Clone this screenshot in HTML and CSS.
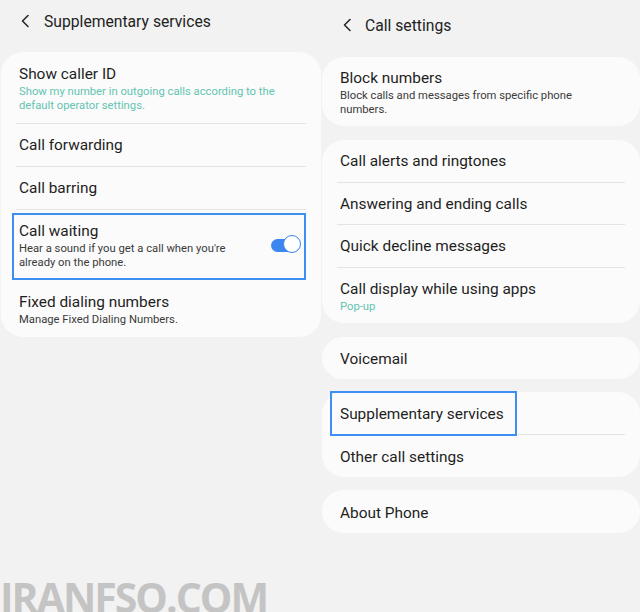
FILE: index.html
```html
<!DOCTYPE html>
<html>
<head>
<meta charset="utf-8">
<link rel="stylesheet" href="styles.css">
</head>
<body>
<div class="screen">
  <section class="panel panel-left">
    <header class="bar bar-left">
      <svg class="back" width="10" height="14" viewBox="0 0 10 14"><path d="M8 1.5 L2.5 7 L8 12.5" fill="none" stroke="#2a2a2a" stroke-width="1.6" stroke-linecap="round" stroke-linejoin="round"/></svg>
      <h1 class="bar-title">Supplementary services</h1>
    </header>
    <div class="card">
      <div class="row row-first">
        <div class="title">Show caller ID</div>
        <div class="sub teal">Show my number in outgoing calls according to the<br>default operator settings.</div>
      </div>
      <div class="sep"></div>
      <div class="row"><div class="title">Call forwarding</div></div>
      <div class="sep"></div>
      <div class="row"><div class="title">Call barring</div></div>
      <div class="sep"></div>
      <div class="row row-switch">
        <div class="text">
          <div class="title">Call waiting</div>
          <div class="sub">Hear a sound if you get a call when you're<br>already on the phone.</div>
        </div>
        <div class="switch"><div class="thumb"></div></div>
        <div class="highlight hl-left"></div>
      </div>
      <div class="row row-last">
        <div class="title">Fixed dialing numbers</div>
        <div class="sub">Manage Fixed Dialing Numbers.</div>
      </div>
    </div>
  </section>

  <section class="panel panel-right">
    <header class="bar bar-right">
      <svg class="back" width="10" height="14" viewBox="0 0 10 14"><path d="M8 1.5 L2.5 7 L8 12.5" fill="none" stroke="#2a2a2a" stroke-width="1.6" stroke-linecap="round" stroke-linejoin="round"/></svg>
      <h1 class="bar-title">Call settings</h1>
    </header>
    <div class="card card-r card-gap-lg">
      <div class="row row-block">
        <div class="title">Block numbers</div>
        <div class="sub">Block calls and messages from specific phone<br>numbers.</div>
      </div>
    </div>
    <div class="card card-r card-gap-lg card-tight">
      <div class="row"><div class="title">Call alerts and ringtones</div></div>
      <div class="sep"></div>
      <div class="row"><div class="title">Answering and ending calls</div></div>
      <div class="sep"></div>
      <div class="row"><div class="title">Quick decline messages</div></div>
      <div class="sep"></div>
      <div class="row row-popup">
        <div class="title">Call display while using apps</div>
        <div class="sub teal">Pop-up</div>
      </div>
    </div>
    <div class="card card-r">
      <div class="row"><div class="title">Voicemail</div></div>
    </div>
    <div class="card card-r">
      <div class="row row-hl">
        <div class="title">Supplementary services</div>
        <div class="highlight hl-right"></div>
      </div>
      <div class="sep"></div>
      <div class="row"><div class="title">Other call settings</div></div>
    </div>
    <div class="card card-r">
      <div class="row row-about"><div class="title">About Phone</div></div>
    </div>
  </section>

  <div class="watermark">IRANFSO.COM</div>
</div>
</body>
</html>
```

FILE: styles.css
```css
html, body {
  margin: 0;
  padding: 0;
  background: #f2f2f2;
}
body {
  font-family: Roboto, "Noto Sans", "Liberation Sans", sans-serif;
  color: #1e1e1e;
}
.screen {
  position: relative;
  width: 640px;
  height: 612px;
  overflow: hidden;
  display: flex;
  background: #f2f2f2;
}
.panel {
  display: flex;
  flex-direction: column;
}
.panel-left {
  width: 321px;
  padding-left: 1px;
  box-sizing: border-box;
}
.panel-right {
  width: 319px;
  padding-left: 1px;
  box-sizing: border-box;
}
.bar {
  display: flex;
  align-items: center;
}
.bar-left {
  height: 42px;
  padding-left: 19px;
  margin-bottom: 10px;
}
.bar-right {
  height: 50px;
  padding-left: 20px;
  margin-bottom: 7px;
}
.back {
  flex: none;
}
.bar-title {
  margin: 0 0 0 14px;
  font-size: 15.7px;
  font-weight: 400;
  color: #222;
}
.bar-right .bar-title {
  margin-left: 13px;
}
.card {
  background: #fbfbfb;
  border-radius: 22px;
  display: flex;
  flex-direction: column;
}
.card-r {
  margin-bottom: 13px;
}
.card-gap-lg {
  margin-bottom: 14px;
}
.row {
  position: relative;
  padding: 10px 18px;
}
.card-r .row {
  padding-top: 11px;
  padding-bottom: 9px;
}
.title {
  font-size: 15.4px;
  line-height: 22px;
  color: #1e1e1e;
}
.sub {
  font-size: 11.25px;
  line-height: 14px;
  color: #3a3a3a;
}
.teal {
  color: #63c4b1;
}
.row-first {
  padding-top: 11px;
  padding-bottom: 10px;
}
.row-last {
  padding-bottom: 10px;
}
.card-r .row-block {
  padding-top: 10px;
  padding-bottom: 9px;
}
.card-tight .title {
  line-height: 21.5px;
}
.card-r .row-popup {
  padding-bottom: 10px;
}
.row-popup .sub {
  line-height: 13px;
}
.card-r .row-about {
  padding-top: 12px;
}
.sep {
  height: 1px;
  background: #e4e4e4;
  margin: 0 15px;
}
.row-switch {
  display: flex;
  align-items: center;
  justify-content: space-between;
  padding-bottom: 11px;
}
.switch {
  position: relative;
  width: 29px;
  height: 13px;
  border-radius: 7px;
  background: #3b86ef;
  margin-right: 3px;
}
.thumb {
  position: absolute;
  right: -1px;
  top: -3.5px;
  width: 16px;
  height: 16px;
  border-radius: 50%;
  background: #fff;
  border: 1.5px solid #3b86ef;
  box-sizing: content-box;
  margin-top: -0.5px;
}
.highlight {
  position: absolute;
  border: 2.5px solid #3d8ff2;
  box-sizing: border-box;
  pointer-events: none;
}
.hl-left {
  left: 11px;
  top: 3px;
  width: 294px;
  height: 67px;
}
.hl-right {
  left: 8px;
  top: -1px;
  width: 187px;
  height: 45px;
}
.watermark {
  position: absolute;
  left: 0;
  top: 572px;
  font-family: "Open Sans", "Liberation Sans", sans-serif;
  font-weight: 700;
  font-size: 41px;
  line-height: 50px;
  color: #c4c4c4;
  letter-spacing: -2px;
}
```
